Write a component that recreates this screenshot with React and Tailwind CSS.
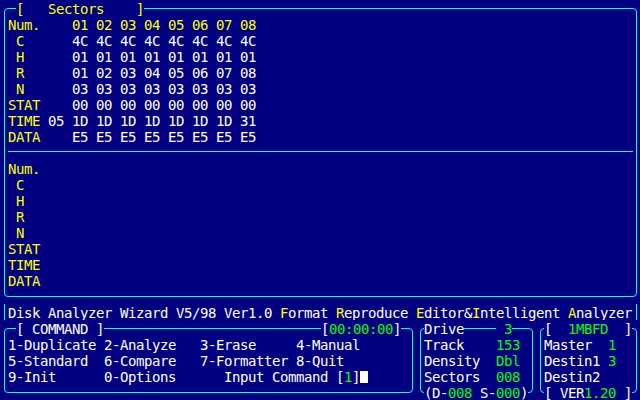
import React from "react";

const Y = ({ children }) => <span className="text-[#ffff00]">{children}</span>;
const G = ({ children }) => <span className="text-[#00ff00]">{children}</span>;
const Mask = ({ children }) => <span className="bg-[#000080] whitespace-pre">{children}</span>;

const sectorRows = [
  { label: "Num.", values: "01 02 03 04 05 06 07 08", head: true },
  { label: " C", values: "4C 4C 4C 4C 4C 4C 4C 4C" },
  { label: " H", values: "01 01 01 01 01 01 01 01" },
  { label: " R", values: "01 02 03 04 05 06 07 08" },
  { label: " N", values: "03 03 03 03 03 03 03 03" },
  { label: "STAT", values: "00 00 00 00 00 00 00 00" },
  { label: "TIME", pre: "05", values: "1D 1D 1D 1D 1D 1D 1D 31" },
  { label: "DATA", values: "E5 E5 E5 E5 E5 E5 E5 E5" },
];

function SectorRow({ label, pre, values, head }) {
  return (
    <div className="h-[16px] pl-[3px] whitespace-pre">
      <Y>{label.padEnd(5)}</Y>
      <span>{(pre || "  ") + " "}</span>
      <span className={head ? "text-[#ffff00]" : "text-white"}>{values}</span>
    </div>
  );
}

const Line = ({ children }) => <div className="h-[16px] pl-[3px] whitespace-pre">{children}</div>;

export default function App() {
  return (
    <div className="w-[640px] h-[400px] overflow-hidden bg-[#000080] text-white flex flex-col pt-[8px] font-['DejaVu_Sans_Mono',monospace] text-[14px] leading-[18px] tracking-[-0.43px]">
      {/* sector panel */}
      <div className="ml-[4px] w-[633px] border border-[#00ffff] rounded-[4px] pb-[8px]">
        <div className="-mt-[9px] ml-[11px] h-[16px] flex">
          <Mask><Y>{"[   Sectors    ]"}</Y></Mask>
        </div>
        {sectorRows.map((r) => (
          <SectorRow key={r.label} {...r} />
        ))}
        <div className="h-[16px] pt-[7px] mx-[3px]">
          <div className="h-px bg-[#00ffff]" />
        </div>
        {sectorRows.map((r) => (
          <SectorRow key={r.label} label={r.label} values="" />
        ))}
      </div>

      {/* title bar */}
      <div className="mt-[7px] ml-[4px] w-[633px] h-[16px] border-x border-[#00ffff] pl-[3px] whitespace-pre">
        Disk Analyzer Wizard V5/98 Ver1.0 <Y>F</Y>ormat <Y>R</Y>eproduce <Y>E</Y>ditor&amp;<Y>I</Y>ntelligent <Y>A</Y>nalyzer
      </div>

      {/* bottom boxes */}
      <div className="mt-[8px] ml-[4px] flex gap-[7px]">
        <div className="w-[409px] border border-[#00ffff] rounded-[4px] pb-[8px]">
          <div className="-mt-[9px] ml-[11px] mr-[11px] h-[16px] flex justify-between">
            <Mask>[ COMMAND ]</Mask>
            <Mask>[<G>00:00:00</G>]</Mask>
          </div>
          <Line>1-Duplicate 2-Analyze   3-Erase     4-Manual</Line>
          <Line>5-Standard  6-Compare   7-Formatter 8-Quit</Line>
          <div className="h-[16px] pl-[3px] whitespace-pre flex items-start">
            <span>9-Init      0-Options      Input Command [</span>
            <G>1</G>
            <span>]</span>
            <div className="mt-[3px] w-[8px] h-[12px] bg-white" />
          </div>
        </div>

        <div className="w-[113px] border border-[#00ffff] rounded-[4px]">
          <div className="-mt-[9px] pl-[3px] pr-[20px] h-[16px] flex justify-between">
            <Mask>Drive</Mask>
            <Mask>{" "}<G>3</G></Mask>
          </div>
          <Line>Track    <G>153</G></Line>
          <Line>Density  <G>Dbl</G></Line>
          <Line>Sectors  <G>008</G></Line>
          <div className="-mb-[8px] h-[16px] pl-[3px] flex">
            <Mask>(D-<G>008</G> S-<G>000</G>)</Mask>
          </div>
        </div>

        <div className="w-[97px] border border-[#00ffff] rounded-[4px]">
          <div className="-mt-[9px] pl-[3px] h-[16px] flex">
            <Mask>[  <G>1MBFD</G>  ]</Mask>
          </div>
          <Line>Master  <G>1</G></Line>
          <Line>Destin1 <G>3</G></Line>
          <Line>Destin2</Line>
          <div className="-mb-[8px] h-[16px] pl-[3px] flex">
            <Mask>[ VER<G>1.20</G> ]</Mask>
          </div>
        </div>
      </div>
    </div>
  );
}
